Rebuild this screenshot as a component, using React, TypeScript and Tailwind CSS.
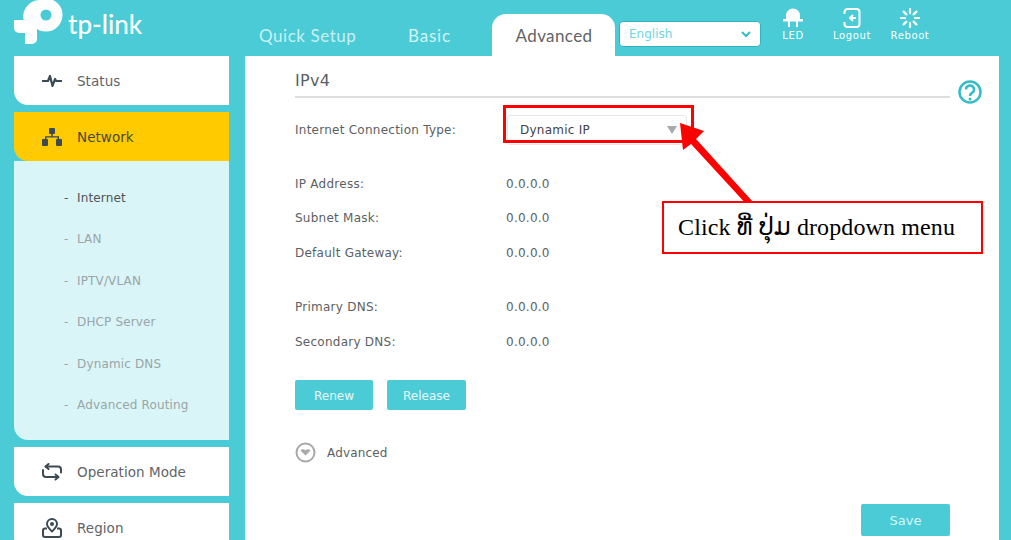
import { ReactNode } from 'react';

const FONT = "font-['DejaVu_Sans',sans-serif]";

function StatusIcon() {
  return (
    <svg width="20" height="14" viewBox="0 0 20 14" fill="none" stroke="#3c4a54" strokeWidth="2.200" strokeLinejoin="round">
      <path d="M0 7h6l2-5 2.500 10L13 5l1.200 2H20" />
    </svg>
  );
}

function NetworkIcon() {
  return (
    <svg width="20" height="18" viewBox="0 0 20 18" fill="#3c4a54">
      <rect x="7" y="0" width="6" height="6" rx="1" />
      <rect x="0" y="11" width="6" height="7" rx="1" />
      <rect x="14" y="11" width="6" height="7" rx="1" />
      <path d="M9.200 6h1.600v2.200H17V11h-1.500V9.600h-11V11H3V8.200h6.200z" />
    </svg>
  );
}

function ModeIcon() {
  return (
    <svg width="20" height="18" viewBox="0 0 20 18" fill="none" stroke="#3c4a54" strokeWidth="2" strokeLinecap="round" strokeLinejoin="round">
      <path d="M4 3.500h12a3 3 0 0 1 3 3v3" />
      <path d="M6.500 1 3.500 3.500 6.500 6" />
      <path d="M1 7v4a3 3 0 0 0 3 3h12" />
      <path d="M13.500 11.500 16.500 14 13.500 16.500" />
    </svg>
  );
}

function RegionIcon() {
  return (
    <svg width="20" height="20" viewBox="0 0 20 20" fill="none" stroke="#3c4a54" strokeWidth="2" strokeLinejoin="round">
      <path d="M10 13.500C7.500 11 5 8.800 5 6a5 5 0 0 1 10 0c0 2.800-2.500 5-5 7.500z" />
      <circle cx="10" cy="6" r="1" fill="#3c4a54" />
      <path d="M5 10.500H3a2 2 0 0 0-2 2V17a2 2 0 0 0 2 2h14a2 2 0 0 0 2-2v-4.500a2 2 0 0 0-2-2h-2" />
    </svg>
  );
}

function SideItem({ icon, label, active }: { icon: ReactNode; label: string; active?: boolean }) {
  return (
    <div className={`flex h-[49px] shrink-0 items-center rounded-bl-[14px] ${active ? 'bg-[#ffcb00] text-[#4a4a3a]' : 'bg-white text-[#5f6468]'}`}>
      <div className="flex w-[63px] justify-end pr-[15px]">{icon}</div>
      <span className="pt-[2px] text-[13.500px] tracking-[0.05px]">{label}</span>
    </div>
  );
}

function Field({ label, value, className = '' }: { label: string; value: string; className?: string }) {
  return (
    <div className={`flex h-[18px] items-center text-[12px] tracking-[0.25px] text-[#5b5f63] ${className}`}>
      <span className="w-[211px] shrink-0 tracking-[0.25px]">{label}</span>
      <span>{value}</span>
    </div>
  );
}

const subItems = ['LAN', 'IPTV/VLAN', 'DHCP Server', 'Dynamic DNS', 'Advanced Routing'];

export default function App() {
  return (
    <div className={`relative flex h-[540px] w-[1011px] flex-col overflow-hidden bg-[#4acbd6] ${FONT}`}>
      {/* header */}
      <header className="flex h-[56px] shrink-0 items-end">
        <div className="flex h-[56px] w-[245px] items-start pl-[14px]">
          <svg width="49" height="45" viewBox="14 0 49 45" fill="white">
            <circle cx="46" cy="15" r="11" fill="none" stroke="white" strokeWidth="11" />
            <path d="M25 24A16.500 16.500 0 0 1 40 0V22H37V39a5 5 0 0 1-5 5H25V33H19a5 5 0 0 1-5-5V20H25z" />
          </svg>
          <span className="mt-[11px] ml-[5px] font-['Lato',sans-serif] text-[26px] leading-none font-medium text-white">tp-link</span>
        </div>
        <nav className="flex items-end font-['Lato',sans-serif] text-[17px]">
          <span className="mb-[8px] ml-[14px] w-[149px] tracking-[0.55px] text-[#c8f0f4]">Quick Setup</span>
          <span className="mb-[8px] w-[84px] tracking-[0.8px] text-[#d5f4f7]">Basic</span>
          <span className="flex h-[42px] w-[123px] items-center justify-center rounded-t-[14px] bg-white pt-[1px] pl-[1px] tracking-[0.4px] text-[#5f6468]">
            Advanced
          </span>
        </nav>
        <div className="mb-[9px] ml-[4px] flex h-[26px] w-[142px] items-center justify-between rounded-[4px] border border-[#2fb3c0] bg-white px-[9px] text-[12px] text-[#6dd5de]">
          English
          <svg width="10" height="7" viewBox="0 0 10 7" fill="none" stroke="#35bcc9" strokeWidth="2">
            <path d="M1 1l4 4 4-4" />
          </svg>
        </div>
        <div className="mb-[15px] ml-[16px] flex w-[32px] flex-col items-center text-[10px] leading-[11px] tracking-[0.6px] text-white">
          <svg width="20" height="20" viewBox="0 0 20 20" fill="white" className="mb-[2px]">
            <path d="M3 11V7.500a7 7 0 0 1 14 0V11h3v2.500H0V11z" />
            <rect x="5" y="13" width="2" height="6" />
            <rect x="13" y="13" width="2" height="6" />
          </svg>
          LED
        </div>
        <div className="mb-[15px] ml-[24px] flex w-[38px] flex-col items-center text-[10px] leading-[11px] tracking-[0.6px] text-white">
          <svg width="18" height="20" viewBox="0 0 18 20" fill="none" stroke="white" strokeWidth="2" className="mb-[2px]">
            <path d="M1.500 6V4a3 3 0 0 1 3-3h9a3 3 0 0 1 3 3v12a3 3 0 0 1-3 3h-9a3 3 0 0 1-3-3v-2" />
            <path d="M13 10H7M10 7l-3 3 3 3" />
          </svg>
          Logout
        </div>
        <div className="mb-[15px] ml-[19px] flex w-[40px] flex-col items-center text-[10px] leading-[11px] tracking-[0.6px] text-white">
          <svg width="20" height="20" viewBox="0 0 20 20" stroke="white" strokeWidth="2.200" strokeLinecap="round" className="mb-[2px]">
            <path d="M10 1v4M10 15v4M1 10h4M15 10h4M3.600 3.600l2.800 2.800M13.600 13.600l2.800 2.800M16.400 3.600l-2.800 2.800M6.400 13.600l-2.800 2.800" />
          </svg>
          Reboot
        </div>
      </header>

      <div className="flex min-h-0 flex-1 pl-[14px]">
        {/* sidebar */}
        <aside className="flex w-[215px] shrink-0 flex-col">
          <SideItem icon={<StatusIcon />} label="Status" />
          <div className="mt-[7px]">
            <SideItem icon={<NetworkIcon />} label="Network" active />
          </div>
          <div className="flex h-[279px] shrink-0 flex-col rounded-bl-[14px] bg-[#d9f5f7] pt-[16px] pl-[50px] text-[12px] tracking-[0.15px] text-[#9aa5a8]">
            <div className="flex h-[41.500px] items-center text-[#4f5458]">
              <span className="w-[13px]">-</span>Internet
            </div>
            {subItems.map((item) => (
              <div key={item} className="flex h-[41.500px] items-center">
                <span className="w-[13px]">-</span>
                {item}
              </div>
            ))}
          </div>
          <div className="mt-[7px]">
            <SideItem icon={<ModeIcon />} label="Operation Mode" />
          </div>
          <div className="mt-[7px]">
            <SideItem icon={<RegionIcon />} label="Region" />
          </div>
        </aside>

        {/* main panel */}
        <main className="relative ml-[16px] w-[754px] shrink-0 bg-white pl-[50px]">
          <div className="flex h-[42px] w-[655px] items-center border-b-2 border-[#dddddd] pt-[14px] pb-[4px] text-[16px] tracking-[0.3px] text-[#5b5f63]">IPv4</div>
          <div className="mt-[17px] flex h-[30px] items-center text-[12px] tracking-[0.25px] text-[#5b5f63]">
            <span className="w-[212px] shrink-0">Internet Connection Type:</span>
            <div className="flex h-[30px] w-[180px] items-center justify-between rounded-[3px] border border-[#e6e6e6] pr-[9px] pl-[12px] text-[#3f4347]">
              Dynamic IP
              <span className="h-0 w-0 border-x-[5px] border-t-[8px] border-x-transparent border-t-[#a7a7ad]" />
            </div>
          </div>
          <Field label="IP Address:" value="0.0.0.0" className="mt-[30px]" />
          <Field label="Subnet Mask:" value="0.0.0.0" className="mt-[16px]" />
          <Field label="Default Gateway:" value="0.0.0.0" className="mt-[17px]" />
          <Field label="Primary DNS:" value="0.0.0.0" className="mt-[36px]" />
          <Field label="Secondary DNS:" value="0.0.0.0" className="mt-[17px]" />
          <div className="mt-[29px] flex gap-[14px] text-[12px] text-[#e8f9fb]">
            <button type="button" className="flex h-[30px] w-[78px] items-center justify-center rounded-[2px] bg-[#4acbd6] pt-[1px]">Renew</button>
            <button type="button" className="flex h-[30px] w-[79px] items-center justify-center rounded-[2px] bg-[#4acbd6] pt-[1px]">Release</button>
          </div>
          <div className="mt-[32px] flex items-center text-[12px] tracking-[0.15px] text-[#5b5f63]">
            <svg width="21" height="21" viewBox="0 0 21 21" className="mr-[11px]">
              <circle cx="10.500" cy="10.500" r="9" fill="none" stroke="#a8a8a8" strokeWidth="2" />
              <path d="M5.500 8.500c1.500-1.800 3.500-1.500 5 0 1.500-1.500 3.500-1.800 5 0l-5 5z" fill="#a8a8a8" />
            </svg>
            Advanced
          </div>
          <button type="button" className="absolute top-[448px] left-[616px] flex h-[32px] w-[89px] items-center justify-center rounded-[2px] bg-[#4acbd6] pt-[1px] text-[13px] text-[#d9f5f7]">Save</button>
          <svg width="26" height="26" viewBox="0 0 26 26" className="absolute top-[23px] left-[712px]">
            <circle cx="13" cy="13" r="10.500" fill="none" stroke="#35bcc9" strokeWidth="2.500" />
            <path d="M9 10.500a4 4 0 1 1 6 3.400c-1.300.8-2 1.400-2 3" fill="none" stroke="#35bcc9" strokeWidth="2.500" />
            <circle cx="13" cy="20" r="1.500" fill="#35bcc9" />
          </svg>
        </main>
      </div>

      {/* annotations over the screenshot */}
      <div className="absolute top-[105px] left-[503px] h-[38px] w-[191px] border-[3px] border-[#ff0000]" />
      <svg width="90" height="110" viewBox="0 0 90 110" className="absolute top-[118px] left-[675px]">
        <path d="M5 5 L29 13 L21 21 L78 84 L73 88 L16 26 L8 32 Z" fill="#ff0000" />
      </svg>
      <div className="absolute top-[201px] left-[662px] flex h-[53px] w-[321px] items-center border-2 border-[#ff0000] bg-white pb-[2px] pl-[14px] font-['Liberation_Serif','DejaVu_Sans',serif] text-[24px] tracking-[0.12px] text-black">
        Click ທີ່ ປຸ່ມ dropdown menu
      </div>
    </div>
  );
}
